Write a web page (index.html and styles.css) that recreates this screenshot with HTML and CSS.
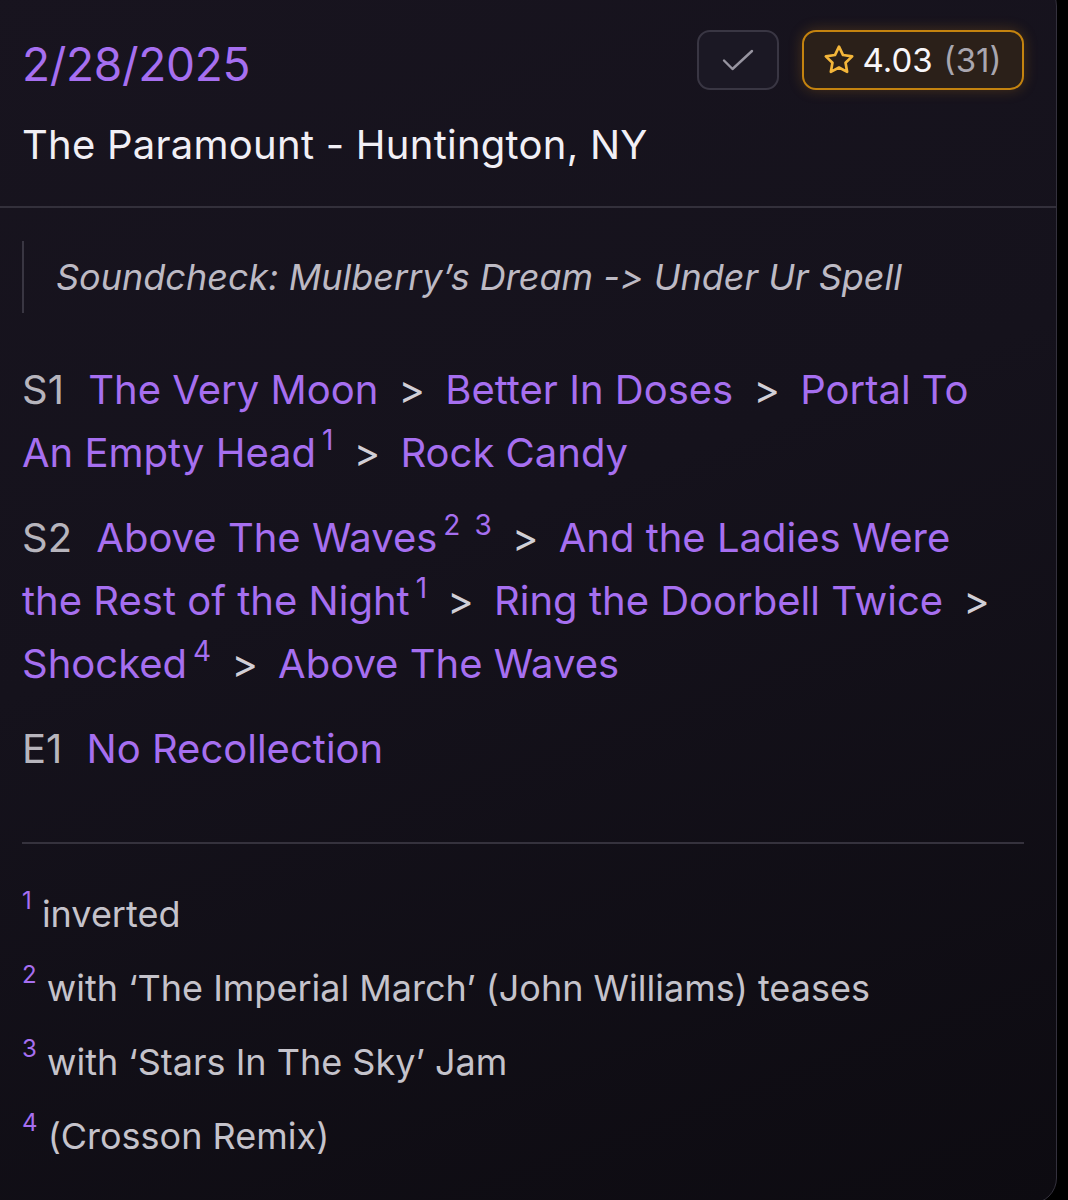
FILE: index.html
```html
<!DOCTYPE html>
<html lang="en">
<head>
<meta charset="utf-8">
<title>2/28/2025 - The Paramount</title>
<link rel="stylesheet" href="styles.css">
</head>
<body>
<div class="card">
  <header class="head">
    <div class="head-text">
      <div class="date">2/28/2025</div>
      <div class="venue">The Paramount - Huntington, NY</div>
    </div>
    <div class="actions">
      <button class="btn-check" aria-label="Mark attended">
        <svg width="32" height="24" viewBox="0 0 32 24" fill="none" stroke="currentColor" stroke-width="2.4" stroke-linecap="round" stroke-linejoin="round"><path d="M2 12.5L10.5 21L30 3"/></svg>
      </button>
      <button class="btn-rating">
        <svg class="star" width="34" height="34" viewBox="0 0 24 24" fill="none" stroke="currentColor" stroke-width="1.9" stroke-linejoin="round"><path d="M12 2.6l2.85 5.9 6.45.92-4.68 4.52 1.12 6.42L12 17.3l-5.74 3.06 1.12-6.42L2.7 9.42l6.45-.92z"/></svg>
        <span class="score">4.03</span>
        <span class="count">(31)</span>
      </button>
    </div>
  </header>
  <div class="body">
    <blockquote class="soundcheck">Soundcheck: Mulberry’s Dream -&gt; Under Ur Spell</blockquote>
    <p class="set"><span class="label">S1</span> <a class="song">The Very Moon</a>&nbsp;<span class="sep">&gt;</span> <a class="song">Better In Doses</a>&nbsp;<span class="sep">&gt;</span> <a class="song">Portal To An Empty Head</a><sup class="fn">1</sup>&nbsp;<span class="sep">&gt;</span> <a class="song">Rock Candy</a></p>
    <p class="set"><span class="label">S2</span> <a class="song">Above The Waves</a><sup class="fn">2</sup><sup class="fn fn-next">3</sup>&nbsp;<span class="sep">&gt;</span> <a class="song">And the Ladies Were the Rest of the Night</a><sup class="fn">1</sup>&nbsp;<span class="sep">&gt;</span> <a class="song">Ring the Doorbell Twice</a>&nbsp;<span class="sep">&gt;</span> <a class="song">Shocked</a><sup class="fn">4</sup>&nbsp;<span class="sep">&gt;</span> <a class="song">Above The Waves</a></p>
    <p class="set"><span class="label">E1</span> <a class="song">No Recollection</a></p>
    <hr class="rule">
    <ol class="notes">
      <li><sup>1</sup> inverted</li>
      <li><sup>2</sup> with ‘The Imperial March’ (John Williams) teases</li>
      <li><sup>3</sup> with ‘Stars In The Sky’ Jam</li>
      <li><sup>4</sup> (Crosson Remix)</li>
    </ol>
  </div>
</div>
</body>
</html>
```
FILE: styles.css
```css
* { box-sizing: border-box; }
html, body { margin: 0; padding: 0; background: #000; }
body {
  font-family: Inter, "Noto Sans", "Liberation Sans", sans-serif;
  font-variant-ligatures: none;
  font-feature-settings: "calt" 0, "liga" 0;
  width: 1068px;
  height: 1200px;
  overflow: hidden;
}
.card {
  margin: -20px 0 0 -20px;
  width: 1077px;
  border: 1px solid #34313d;
  border-radius: 26px;
  background: linear-gradient(160deg, #18141f 0%, #15121c 45%, #0d0b11 100%);
  padding-bottom: 30px;
}
.head {
  display: flex;
  justify-content: space-between;
  align-items: flex-start;
  padding: 55px 32px 0 41px;
  height: 227px;
  border-bottom: 2px solid #33303b;
}
.date {
  font-size: 46px;
  color: #a66ff0;
  line-height: 56px;
  letter-spacing: -0.3px;
}
.venue {
  font-size: 40px;
  color: #f1eff5;
  line-height: 48px;
  letter-spacing: 0.25px;
  margin-top: 29px;
}
.actions {
  display: flex;
  gap: 23px;
  margin-top: -6px;
}
button { font-family: inherit; cursor: pointer; }
.btn-check {
  width: 82px;
  height: 60px;
  border-radius: 13px;
  border: 2px solid #393643;
  background: #1b1824;
  color: #9794a0;
  display: flex;
  align-items: center;
  justify-content: center;
  padding: 0;
}
.btn-rating {
  width: 222px;
  height: 60px;
  border-radius: 14px;
  border: 2px solid #c4830f;
  background: #2b2019;
  box-shadow: 0 0 14px rgba(200, 130, 20, 0.28);
  display: flex;
  align-items: center;
  justify-content: center;
  padding: 0 3px 0 0;
}
.star { color: #f4b63a; margin-right: 7px; flex: none; }
.score { color: #f8f6f9; font-size: 33px; }
.count { color: #a9a6af; font-size: 33px; margin-left: 11px; }

.body { padding: 33px 32px 0 41px; }
.soundcheck {
  margin: 0;
  border-left: 2px solid #393642;
  padding: 18px 0 18px 32px;
  font-style: italic;
  font-size: 36px;
  line-height: 36px;
  color: #bdbac4;
}
.set {
  margin: 45px 12px 0 0;
  font-size: 40px;
  line-height: 63px;
  color: #a66ff0;
}
.set + .set { margin-top: 22px; }
.label { color: #b7b5bd; margin-right: 13px; }
.song { color: #a66ff0; }
.sep { color: #d1cfd6; margin: 0 9px; }
.fn {
  font-size: 28px;
  line-height: 0;
  vertical-align: 0;
  position: relative;
  top: -17px;
  margin-left: 6px;
  color: #a66ff0;
}
.fn-next { margin-left: 14px; }
.rule {
  border: 0;
  border-top: 2px solid #35323d;
  margin: 62px 0 0 0;
}
.notes {
  list-style: none;
  margin: 33px 0 0 0;
  padding: 0;
  font-size: 36px;
  line-height: 74px;
  color: #c5c3cb;
}
.notes sup {
  font-size: 24px;
  color: #a66ff0;
  line-height: 0;
  vertical-align: 0;
  position: relative;
  top: -18px;
}
```
